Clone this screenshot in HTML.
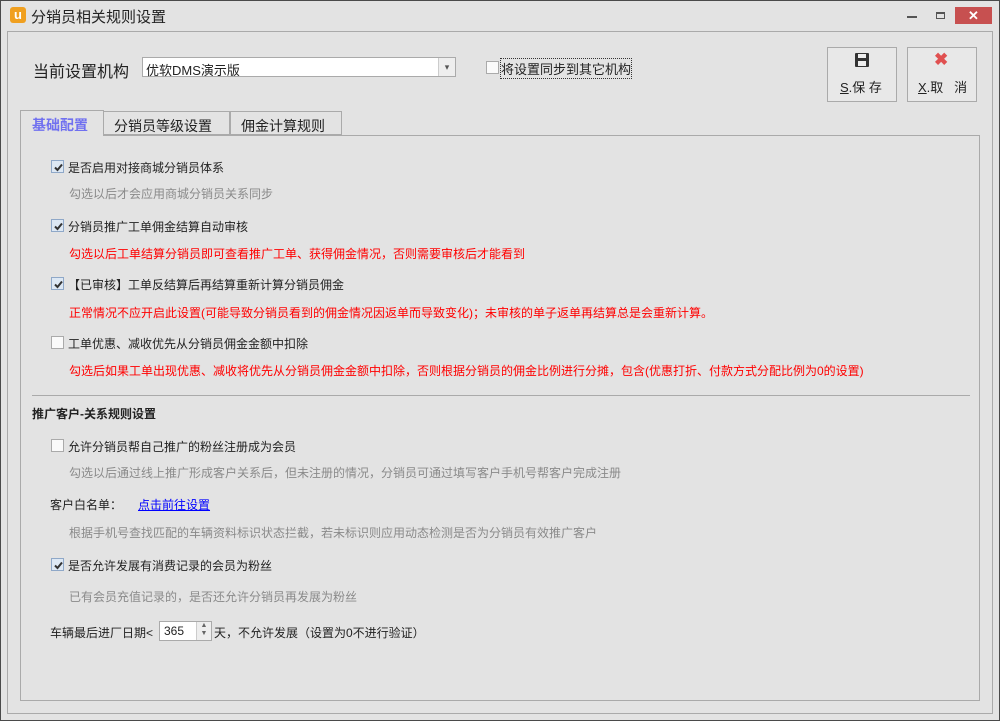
<!DOCTYPE html>
<html><head><meta charset="utf-8"><style>
*{margin:0;padding:0;box-sizing:border-box}
body{width:1000px;height:721px;background:#e3e3e3;font-family:"Liberation Sans","Microsoft YaHei","Noto Sans CJK SC",sans-serif;font-size:12px;color:#222;position:relative;overflow:hidden}
.win{position:absolute;left:0;top:0;width:1000px;height:721px;border:1px solid #4a4a4a}
.a{position:absolute;white-space:nowrap}
.cb{position:absolute;width:13px;height:13px;border:1px solid #8fa8c8;background:#dde8f4}
.cb.u{border-color:#aaa;background:#fafafa}
.cb svg{position:absolute;left:1px;top:1px}
.g{color:#8a8a8a}.r{color:#f00}
</style></head><body>
<div class="win"></div>
<div class="a" style="left:10px;top:7px;width:16px;height:16px;background:#f0a020;border-radius:3px;color:#fff;font-weight:bold;font-size:13px;text-align:center;line-height:15px">u</div>
<div class="a" style="left:31px;top:6px;font-size:15px">分销员相关规则设置</div>
<div class="a" style="left:907px;top:16px;width:10px;height:2px;background:#555"></div>
<div class="a" style="left:936px;top:12px;width:9px;height:7px;border:1px solid #555;border-top-width:2px"></div>
<div class="a" style="left:955px;top:7px;width:37px;height:17px;background:#c75050;color:#fff;text-align:center;font-size:13px;line-height:17px;font-weight:bold">✕</div>
<div class="a" style="left:7px;top:31px;width:986px;height:683px;border:1px solid #aaa"></div>
<div class="a" style="left:33px;top:58px;font-size:16px">当前设置机构</div>
<div class="a" style="left:142px;top:57px;width:314px;height:20px;border:1px solid #aaa;background:#fff;padding:2px 3px;font-size:13px">优软DMS演示版</div>
<div class="a" style="left:438px;top:58px;width:17px;height:18px;border-left:1px solid #ccc;background:#eee;text-align:center;font-size:9px;color:#555;line-height:18px">▾</div>
<div class="cb u" style="left:486px;top:61px"></div>
<div class="a" style="left:501px;top:59px;font-size:13px;outline:1px dotted #333">将设置同步到其它机构</div>
<div class="a" style="left:827px;top:47px;width:70px;height:55px;border:1px solid #aaa;background:#e8e8e8"></div>
<div class="a" style="left:855px;top:53px;width:14px;height:14px;background:#333;border-radius:1px"><div style="position:absolute;left:3px;top:1px;width:8px;height:4px;background:#eee"></div><div style="position:absolute;left:3px;top:8px;width:8px;height:5px;background:#eee"></div></div>
<div class="a" style="left:840px;top:77px;font-size:13px"><u>S</u>.保 存</div>
<div class="a" style="left:907px;top:47px;width:70px;height:55px;border:1px solid #aaa;background:#e8e8e8"></div>
<div class="a" style="left:934px;top:50px;color:#e05050;font-size:17px;font-weight:bold">✖</div>
<div class="a" style="left:918px;top:77px;font-size:13px"><u>X</u>.取 &nbsp; 消</div>
<div class="a" style="left:20px;top:110px;width:84px;height:26px;border:1px solid #aaa;border-bottom:none;background:#e3e3e3;z-index:2"></div>
<div class="a" style="left:32px;top:115px;font-size:14px;color:#7070f0;font-weight:bold;z-index:3">基础配置</div>
<div class="a" style="left:103px;top:111px;width:127px;height:24px;border:1px solid #aaa"></div>
<div class="a" style="left:114px;top:116px;font-size:14px">分销员等级设置</div>
<div class="a" style="left:230px;top:111px;width:112px;height:24px;border:1px solid #aaa"></div>
<div class="a" style="left:241px;top:116px;font-size:14px">佣金计算规则</div>
<div class="a" style="left:20px;top:135px;width:960px;height:566px;border:1px solid #aaa"></div>

<div class="cb" style="left:51px;top:160px"><svg width="11" height="11"><path d="M2 5.5L4.5 8L9 2.5" stroke="#333" stroke-width="2" fill="none"/></svg></div>
<div class="a" style="left:68px;top:159px">是否启用对接商城分销员体系</div>
<div class="a g" style="left:69px;top:185px">勾选以后才会应用商城分销员关系同步</div>
<div class="cb" style="left:51px;top:219px"><svg width="11" height="11"><path d="M2 5.5L4.5 8L9 2.5" stroke="#333" stroke-width="2" fill="none"/></svg></div>
<div class="a" style="left:68px;top:218px">分销员推广工单佣金结算自动审核</div>
<div class="a r" style="left:69px;top:245px">勾选以后工单结算分销员即可查看推广工单、获得佣金情况，否则需要审核后才能看到</div>
<div class="cb" style="left:51px;top:277px"><svg width="11" height="11"><path d="M2 5.5L4.5 8L9 2.5" stroke="#333" stroke-width="2" fill="none"/></svg></div>
<div class="a" style="left:68px;top:276px">【已审核】工单反结算后再结算重新计算分销员佣金</div>
<div class="a r" style="left:69px;top:304px">正常情况不应开启此设置(可能导致分销员看到的佣金情况因返单而导致变化)；未审核的单子返单再结算总是会重新计算。</div>
<div class="cb u" style="left:51px;top:336px"></div>
<div class="a" style="left:68px;top:335px">工单优惠、减收优先从分销员佣金金额中扣除</div>
<div class="a r" style="left:69px;top:362px">勾选后如果工单出现优惠、减收将优先从分销员佣金金额中扣除，否则根据分销员的佣金比例进行分摊，包含(优惠打折、付款方式分配比例为0的设置)</div>
<div class="a" style="left:32px;top:395px;width:938px;height:1px;background:#aaa"></div>
<div class="a" style="left:32px;top:405px;font-weight:bold">推广客户-关系规则设置</div>
<div class="cb u" style="left:51px;top:439px"></div>
<div class="a" style="left:68px;top:438px">允许分销员帮自己推广的粉丝注册成为会员</div>
<div class="a g" style="left:69px;top:464px">勾选以后通过线上推广形成客户关系后，但未注册的情况，分销员可通过填写客户手机号帮客户完成注册</div>
<div class="a" style="left:50px;top:496px">客户白名单：</div>
<div class="a" style="left:138px;top:496px;color:#00f;text-decoration:underline">点击前往设置</div>
<div class="a g" style="left:69px;top:524px">根据手机号查找匹配的车辆资料标识状态拦截，若未标识则应用动态检测是否为分销员有效推广客户</div>
<div class="cb" style="left:51px;top:558px"><svg width="11" height="11"><path d="M2 5.5L4.5 8L9 2.5" stroke="#333" stroke-width="2" fill="none"/></svg></div>
<div class="a" style="left:68px;top:557px">是否允许发展有消费记录的会员为粉丝</div>
<div class="a g" style="left:69px;top:588px">已有会员充值记录的，是否还允许分销员再发展为粉丝</div>
<div class="a" style="left:50px;top:624px">车辆最后进厂日期&lt;</div>
<div class="a" style="left:159px;top:621px;width:53px;height:20px;border:1px solid #aaa;background:#fff;padding:2px 4px">365</div>
<div class="a" style="left:196px;top:622px;width:15px;height:18px;background:#eee;border-left:1px solid #ccc;font-size:7px;color:#666;text-align:center;line-height:8px">▲<br>▼</div>
<div class="a" style="left:214px;top:624px">天，不允许发展（设置为0不进行验证）</div>
</body></html>
